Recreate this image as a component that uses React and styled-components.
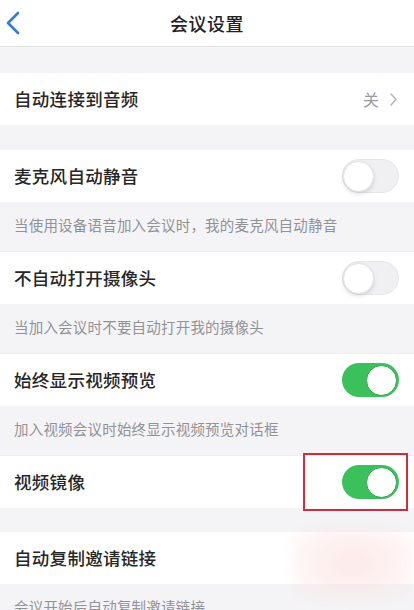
import React from "react";
import styled, {createGlobalStyle} from "styled-components";

const GlobalStyle = createGlobalStyle`
  html, body {
    margin: 0;
    padding: 0;
    background: #f4f4f6;
    font-family: "Noto Sans CJK SC", "Noto Sans", "Liberation Sans", sans-serif;
  }
`

const settings = [
  {title: "麦克风自动静音", desc: "当使用设备语音加入会议时，我的麦克风自动静音", on: false},
  {title: "不自动打开摄像头", desc: "当加入会议时不要自动打开我的摄像头", on: false},
  {title: "始终显示视频预览", desc: "加入视频会议时始终显示视频预览对话框", on: true},
  {title: "视频镜像", on: true, marked: true},
]

const Toggle = ({on}) => (
  <StTrack on={on ? 1 : 0}>
    <StKnob on={on ? 1 : 0}/>
  </StTrack>
)

const App = () => {
  return (
    <>
      <GlobalStyle/>
      <StPage>
        <StHeader>
          <StBack>
            <svg width="16" height="24" viewBox="0 0 16 24">
              <polyline points="13,2 3,12 13,22" fill="none" stroke="#2f7be0" strokeWidth="2.6"
                        strokeLinecap="round" strokeLinejoin="round"/>
            </svg>
          </StBack>
          <StTitle>会议设置</StTitle>
        </StHeader>

        <StGap h={26}/>
        <StRow>
          <StLabel>自动连接到音频</StLabel>
          <StValue>
            关
            <svg width="9" height="15" viewBox="0 0 9 15">
              <polyline points="2,2 7,7.5 2,13" fill="none" stroke="#b5b5b8" strokeWidth="1.6"
                        strokeLinecap="round" strokeLinejoin="round"/>
            </svg>
          </StValue>
        </StRow>
        <StGap h={25}/>

        {settings.map((item) => (
          <React.Fragment key={item.title}>
            <StRow>
              <StLabel>{item.title}</StLabel>
              {item.marked ? (
                <StMark><Toggle on={item.on}/></StMark>
              ) : <Toggle on={item.on}/>}
            </StRow>
            {item.desc && <StDesc>{item.desc}</StDesc>}
          </React.Fragment>
        ))}

        <StGap h={24}/>
        <StLast>
          <StRow>
            <StLabel>自动复制邀请链接</StLabel>
          </StRow>
          <StDesc>会议开始后自动复制邀请链接</StDesc>
          <StBlur/>
        </StLast>
      </StPage>
    </>
  )
}

const StPage = styled.div`
  width: 414px;
  height: 610px;
  overflow: hidden;
  background: #f4f4f6;
`

const StHeader = styled.div`
  height: 46px;
  background: #fff;
  border-bottom: 1px solid #e2e2e4;
  display: flex;
  align-items: center;
  justify-content: center;
  position: relative;
`

const StBack = styled.div`
  position: absolute;
  left: 5px;
  top: 11px;
  display: flex;
`

const StTitle = styled.div`
  font-size: 18px;
  font-weight: 500;
  color: #222;
  letter-spacing: 0.5px;
`

const StGap = styled.div`
  height: ${props => props.h}px;
`

const StRow = styled.div`
  height: 52px;
  background: #fff;
  display: flex;
  align-items: center;
  justify-content: space-between;
  padding: 0 15px 0 14px;
`

const StLabel = styled.div`
  font-size: 17.5px;
  font-weight: 500;
  color: #262626;
  letter-spacing: 0.3px;
  margin-top: -2px;
`

const StValue = styled.div`
  display: flex;
  align-items: center;
  gap: 10px;
  font-size: 16px;
  color: #9a9a9e;
  padding-right: 1px;
`

const StDesc = styled.div`
  height: 50px;
  display: flex;
  align-items: center;
  padding: 0 14px 5px;
  box-sizing: border-box;
  font-size: 14.5px;
  color: #929296;
  letter-spacing: 0.2px;
  border-bottom: 1px solid #ededef;
`

const StTrack = styled.div`
  width: 57px;
  height: 34px;
  border-radius: 17px;
  box-sizing: border-box;
  background: ${props => props.on ? "#3bc15b" : "#f0f0f2"};
  border: ${props => props.on ? "none" : "1.5px solid #e6e6e8"};
  display: flex;
  align-items: center;
  justify-content: ${props => props.on ? "flex-end" : "flex-start"};
  padding: 0 2px;
`

const StKnob = styled.div`
  width: 31px;
  height: 31px;
  border-radius: 50%;
  background: #fff;
  box-sizing: border-box;
  border: 1px solid ${props => props.on ? "#2ea54c" : "#e4e4e6"};
  box-shadow: ${props => props.on ? "none" : "0 2px 4px rgba(0,0,0,0.12)"};
  margin-left: ${props => props.on ? "0" : "-2px"};
`

const StMark = styled.div`
  width: 105px;
  height: 58px;
  margin-right: -9px;
  box-sizing: border-box;
  border: 2px solid #c8303f;
  display: flex;
  align-items: center;
  justify-content: flex-end;
  padding-right: 7px;
`

const StLast = styled.div`
  position: relative;
`

const StBlur = styled.div`
  position: absolute;
  right: 0;
  top: -8px;
  width: 122px;
  height: 78px;
  background: radial-gradient(ellipse at center, rgba(248, 212, 210, 0.5), rgba(250, 225, 222, 0.35) 60%, rgba(255, 255, 255, 0) 100%);
  filter: blur(6px);
`

export default App
